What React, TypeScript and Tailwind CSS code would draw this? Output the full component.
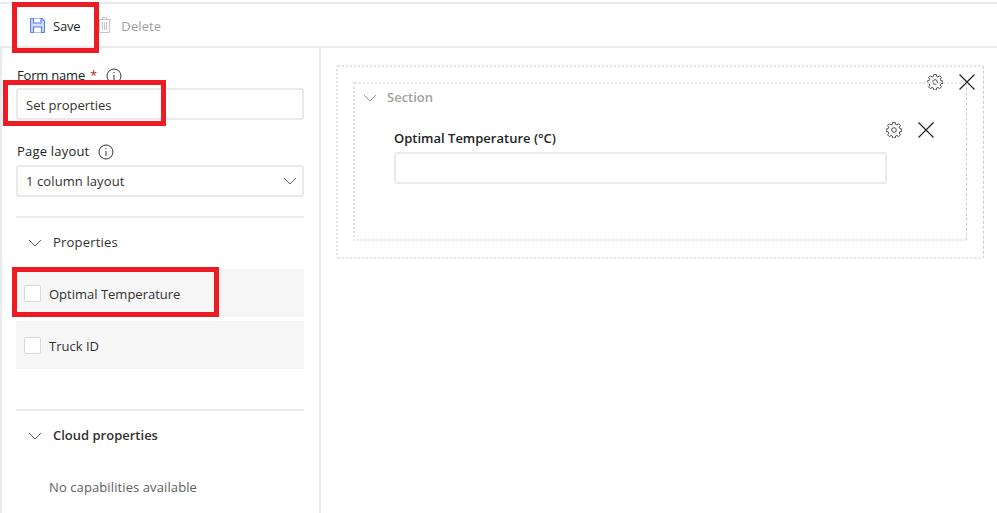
import React from "react";

const Chevron = ({ className = "" }: { className?: string }) => (
  <svg width="14" height="8" viewBox="0 0 14 8" fill="none" stroke="currentColor" strokeWidth="1" className={className}>
    <path d="M1 1 L7 7 L13 1" />
  </svg>
);

const Info = () => (
  <svg width="16" height="16" viewBox="0 0 16 16" fill="none" stroke="#323130" strokeWidth="1">
    <circle cx="8" cy="8" r="7" />
    <path d="M8 7 V12" />
    <path d="M8 4 V5.2" />
  </svg>
);

const Gear = () => (
  <svg width="16" height="16" viewBox="1 1.500 22 22" fill="none" stroke="#323130" strokeWidth="1.200" strokeLinejoin="round">
    <path d="M10.3 2h3.4l.5 2.800 1.900.8 2.300-1.600 2.400 2.400-1.600 2.300.8 1.900 2.800.5v3.400l-2.800.5-.8 1.900 1.600 2.300-2.400 2.400-2.300-1.600-1.900.8-.5 2.800h-3.400l-.5-2.800-1.900-.8-2.300 1.600-2.400-2.400 1.600-2.300-.8-1.900-2.800-.5v-3.400l2.800-.5.8-1.900-1.600-2.300 2.400-2.400 2.300 1.600 1.900-.8z" />
    <circle cx="12" cy="12.500" r="3.200" />
  </svg>
);

const Close = () => (
  <svg width="16" height="16" viewBox="0 0 16 16" fill="none" stroke="#201f1e" strokeWidth="1.2">
    <path d="M0.5 0.5 L15.5 15.5 M15.5 0.5 L0.5 15.5" />
  </svg>
);

const Row = ({ label }: { label: string }) => (
  <div className="h-12 bg-[#f6f6f6] flex items-center pl-2 gap-2">
    <span className="w-[17px] h-[17px] bg-white border border-[#d8d8d8] rounded-[2px] shrink-0" />
    <span className="mt-1 text-[13px] text-[#323130]">{label}</span>
  </div>
);

const Actions = () => (
  <div className="flex items-center gap-4 bg-white">
    <Gear />
    <Close />
  </div>
);

export default function App() {
  return (
    <div className="relative w-[997px] h-[513px] overflow-hidden bg-white pt-[2px] font-['Open_Sans','Noto_Sans',sans-serif] text-[#323130]">
      <div className="h-[46px] border-y-2 border-[#eaeaea] flex items-center pl-[30px]">
        <div className="flex items-center gap-[8px]">
          <svg width="15" height="15" viewBox="0 0 15 15" fill="none" stroke="#5b7bf0" strokeWidth="1.200">
            <path d="M1 .5h11l2.500 2.500v10.500a1 1 0 0 1-1 1h-12a1 1 0 0 1-1-1v-12a1 1 0 0 1 .5-1z" fill="#d3dffb" />
            <path d="M3.500 .5v4.500h7.500v-4.500" fill="#ffffff" />
            <path d="M3.500 14.500v-5.500h8v5.500" fill="#ffffff" />
          </svg>
          <span className="mt-[2px] text-[13px] leading-none text-[#201f1e] tracking-[-0.2px]">Save</span>
        </div>
        <div className="flex items-center gap-[10px] ml-[18px]">
          <svg width="13" height="16" viewBox="0 0 13 16" fill="none" stroke="#c8c6c4" strokeWidth="1">
            <path d="M0 2.500h13M4.500 2.500v-2h4v2M1.500 2.500v13h10v-13M4.500 5v8M6.500 5v8M8.500 5v8" />
          </svg>
          <span className="mt-[2px] text-[13px] leading-none text-[#a19f9d] tracking-[0.1px]">Delete</span>
        </div>
      </div>

      <div className="flex h-[465px]">
        <aside className="w-[321px] shrink-0 border-x-2 border-[#eaeaea] pl-[14px] pr-[15px] pt-[18px]">
          <div className="flex items-center h-[19px] pl-[1px] text-[13px] text-[#201f1e] tracking-[-0.2px]">
            Form name <span className="text-[#a4262c] ml-[5px]">*</span>
            <span className="ml-[9px]"><Info /></span>
          </div>
          <div className="mt-[3px] h-8 border-2 border-[#eaeaea] rounded-[3px] flex items-center pl-2 pt-1 text-[13px]">
            Set properties
          </div>
          <div className="mt-[21px] flex items-center h-[19px] pl-[1px] pt-[2px] text-[13px] text-[#201f1e] tracking-[0.2px]">
            Page layout
            <span className="ml-[9px]"><Info /></span>
          </div>
          <div className="mt-[5px] h-8 border-2 border-[#eaeaea] rounded-[3px] flex items-center justify-between pl-2 pr-[5px] text-[13px] tracking-[0.1px]">
            <span className="mt-[2px]">1 column layout</span>
            <Chevron className="text-[#605e5c]" />
          </div>
          <div className="mt-[19px] border-t-2 border-[#eaeaea] h-[53px] pb-[2px] flex items-center pl-[12px] gap-[11px]">
            <Chevron className="text-[#605e5c]" />
            <span className="text-[13px] font-medium text-[#323130] tracking-[0.2px]">Properties</span>
          </div>
          <div className="flex flex-col gap-1">
            <Row label="Optimal Temperature" />
            <Row label="Truck ID" />
          </div>
          <div className="mt-[40px] border-t-2 border-[#eaeaea] h-[54px] pb-[2px] flex items-center pl-[12px] gap-[11px]">
            <Chevron className="text-[#605e5c]" />
            <span className="text-[13px] font-semibold text-[#323130]">Cloud properties</span>
          </div>
          <div className="mt-[15px] pl-[33px] text-[13px] text-[#605e5c] tracking-[0.1px]">No capabilities available</div>
        </aside>

        <main className="flex-1 pl-[15px] pt-[17px]">
          <div className="relative w-[648px] h-[194px] border-y-2 border-l-2 border-r border-dotted [border-right-style:dashed] border-[#e3e3e3] border-r-[#cccccc] rounded-[2px] p-[15px]">
            <div className="absolute right-[8px] top-[7px] pb-[8px] pl-[8px] bg-white">
              <Actions />
            </div>
            <div className="relative w-[614px] h-[159px] border-y-2 border-l-2 border-r border-dotted [border-right-style:dashed] border-[#e3e3e3] border-r-[#cccccc] rounded-[2px]">
              <div className="flex items-center h-[27px] pl-[8px] gap-[10px]">
                <Chevron className="text-[#a19f9d]" />
                <span className="text-[13px] font-semibold text-[#a19f9d]">Section</span>
              </div>
              <div className="absolute right-[32px] top-[38px]">
                <Actions />
              </div>
              <div className="pl-[39px] pt-[18px]">
                <div className="h-[20px] text-[13px] font-semibold text-[#201f1e] flex items-center">Optimal Temperature (°C)</div>
                <div className="mt-[3px] w-[493px] h-8 border-2 border-[#eaeaea] rounded-[3px]" />
              </div>
            </div>
          </div>
        </main>
      </div>

      <div className="absolute left-[12px] top-[2px] w-[87px] h-[51px] border-[5px] border-[#ed1c24]" />
      <div className="absolute left-[3px] top-[80px] w-[163px] h-[46px] border-[5px] border-[#ed1c24]" />
      <div className="absolute left-[12px] top-[267px] w-[207px] h-[50px] border-[5px] border-[#ed1c24]" />
    </div>
  );
}
